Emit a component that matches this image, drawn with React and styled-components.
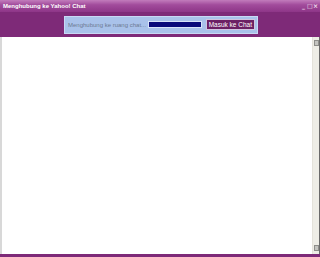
import styled, { createGlobalStyle } from 'styled-components'

const GlobalStyle = createGlobalStyle`
  html, body {
    margin: 0;
    padding: 0;
    background: #ffffff;
  }
  body {
    font-family: "Liberation Sans", Arial, sans-serif;
  }
`

const App = () => {
  return (
    <Window>
      <GlobalStyle />
      <TitleBar>
        <Title>Menghubung ke Yahoo! Chat</Title>
        <Controls>
          <Control>_</Control>
          <Control>□</Control>
          <Control>×</Control>
        </Controls>
      </TitleBar>
      <Band>
        <Panel>
          <Status>Menghubung ke ruang chat...</Status>
          <Progress />
          <JoinButton>Masuk ke Chat</JoinButton>
        </Panel>
      </Band>
      <Body>
        <Content />
        <ScrollBar>
          <ScrollButton />
          <Track />
          <ScrollButton />
        </ScrollBar>
      </Body>
      <Footer />
    </Window>
  )
}

const Window = styled.div`
  width: 320px;
  height: 257px;
  display: flex;
  flex-direction: column;
  overflow: hidden;
`

const TitleBar = styled.div`
  height: 12px;
  display: flex;
  align-items: center;
  justify-content: space-between;
  padding: 0 2px 0 3px;
  background: linear-gradient(#c27cbc 0%, #a24c9c 40%, #8e3688 100%);
`

const Title = styled.span`
  color: #ffffff;
  font-size: 6px;
  font-weight: bold;
`

const Controls = styled.div`
  display: flex;
  gap: 1px;
`

const Control = styled.span`
  color: #f4e4f2;
  font-family: "DejaVu Sans", sans-serif;
  font-size: 6px;
  font-weight: bold;
  width: 5px;
  text-align: center;
  line-height: 6px;
`

const Band = styled.div`
  height: 25px;
  display: flex;
  align-items: center;
  justify-content: center;
  background: #7e2a78;
`

const Panel = styled.div`
  width: 187px;
  height: 14px;
  display: flex;
  align-items: center;
  gap: 4px;
  padding: 1px 2px 1px 3px;
  margin-left: 2px;
  background: #a9c2ea;
  border: 1px solid #c8d8f4;
`

const Status = styled.span`
  width: 76px;
  flex-shrink: 0;
  color: #6c7a92;
  font-size: 6px;
  white-space: nowrap;
`

const Progress = styled.div`
  width: 56px;
  height: 5px;
  background: #0a0a7a;
  border: 1px solid #d8e4f8;
`

const JoinButton = styled.button`
  margin-left: auto;
  height: 11px;
  padding: 0 2px;
  background: #6c2064;
  color: #ffffff;
  border: 1px solid #d0c4e0;
  font-family: "Liberation Sans", Arial, sans-serif;
  font-size: 6.5px;
  line-height: 9px;
  white-space: nowrap;
`

const Body = styled.div`
  flex: 1;
  display: flex;
  border-left: 2px solid #d8d8d8;
  border-right: 1px solid #6a6a6a;
`

const Content = styled.div`
  flex: 1;
  background: #ffffff;
`

const ScrollBar = styled.div`
  width: 6px;
  display: flex;
  flex-direction: column;
  background: #eeede6;
  border-left: 1px solid #e4e2da;
`

const ScrollButton = styled.div`
  height: 6px;
  margin: 3px 0 3px 1px;
  background: #c4c4c0;
  border: 1px solid #8e8e8a;
  box-sizing: border-box;
`

const Track = styled.div`
  flex: 1;
`

const Footer = styled.div`
  height: 3px;
  background: #7e2a78;
`

export default App
